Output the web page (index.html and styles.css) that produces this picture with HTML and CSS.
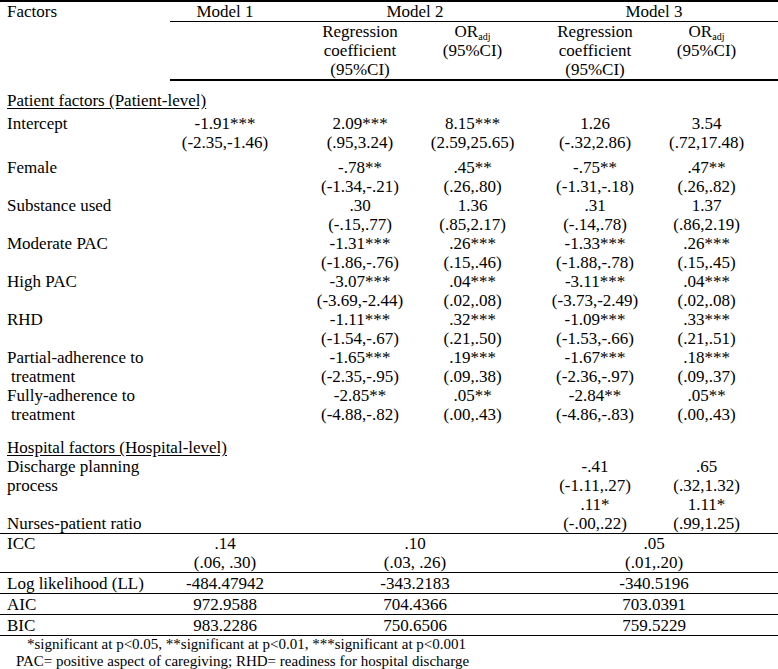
FILE: index.html
```html
<!DOCTYPE html>
<html lang="en">
<head>
<meta charset="utf-8">
<title>Multilevel model table</title>
<link rel="stylesheet" href="styles.css">
</head>
<body>
<table class="tbl">
  <colgroup>
    <col class="w-f"><col class="w-m1"><col class="w-r2"><col class="w-o2"><col class="w-r3"><col class="w-o3">
  </colgroup>
  <thead>
    <tr>
      <th class="lbl" rowspan="2">Factors</th>
      <th class="mh c1">Model 1</th>
      <th class="mh c2h" colspan="2">Model 2</th>
      <th class="mh" colspan="2">Model 3</th>
    </tr>
    <tr class="sub">
      <th></th>
      <th class="c2">Regression<br>coefficient<br>(95%CI)</th>
      <th class="c3">OR<sub>adj</sub><br>(95%CI)</th>
      <th class="c4">Regression<br>coefficient<br>(95%CI)</th>
      <th class="c5">OR<sub>adj</sub><br>(95%CI)</th>
    </tr>
  </thead>
  <tbody>
    <tr class="sect"><td class="lbl" colspan="6"><span class="u">Patient factors (Patient-level)</span></td></tr>
    <tr class="first">
      <td class="lbl">Intercept</td>
      <td class="c1">-1.91***<br>(-2.35,-1.46)</td>
      <td class="c2">2.09***<br>(.95,3.24)</td>
      <td class="c3">8.15***<br>(2.59,25.65)</td>
      <td class="c4">1.26<br>(-.32,2.86)</td>
      <td class="c5">3.54<br>(.72,17.48)</td>
    </tr>
    <tr>
      <td class="lbl">Female</td>
      <td class="c1"></td>
      <td class="c2">-.78**<br>(-1.34,-.21)</td>
      <td class="c3">.45**<br>(.26,.80)</td>
      <td class="c4">-.75**<br>(-1.31,-.18)</td>
      <td class="c5">.47**<br>(.26,.82)</td>
    </tr>
    <tr>
      <td class="lbl">Substance used</td>
      <td class="c1"></td>
      <td class="c2">.30<br>(-.15,.77)</td>
      <td class="c3">1.36<br>(.85,2.17)</td>
      <td class="c4">.31<br>(-.14,.78)</td>
      <td class="c5">1.37<br>(.86,2.19)</td>
    </tr>
    <tr>
      <td class="lbl">Moderate PAC</td>
      <td class="c1"></td>
      <td class="c2">-1.31***<br>(-1.86,-.76)</td>
      <td class="c3">.26***<br>(.15,.46)</td>
      <td class="c4">-1.33***<br>(-1.88,-.78)</td>
      <td class="c5">.26***<br>(.15,.45)</td>
    </tr>
    <tr>
      <td class="lbl">High PAC</td>
      <td class="c1"></td>
      <td class="c2">-3.07***<br>(-3.69,-2.44)</td>
      <td class="c3">.04***<br>(.02,.08)</td>
      <td class="c4">-3.11***<br>(-3.73,-2.49)</td>
      <td class="c5">.04***<br>(.02,.08)</td>
    </tr>
    <tr>
      <td class="lbl">RHD</td>
      <td class="c1"></td>
      <td class="c2">-1.11***<br>(-1.54,-.67)</td>
      <td class="c3">.32***<br>(.21,.50)</td>
      <td class="c4">-1.09***<br>(-1.53,-.66)</td>
      <td class="c5">.33***<br>(.21,.51)</td>
    </tr>
    <tr>
      <td class="lbl">Partial-adherence to<br><span class="ind">treatment</span></td>
      <td class="c1"></td>
      <td class="c2">-1.65***<br>(-2.35,-.95)</td>
      <td class="c3">.19***<br>(.09,.38)</td>
      <td class="c4">-1.67***<br>(-2.36,-.97)</td>
      <td class="c5">.18***<br>(.09,.37)</td>
    </tr>
    <tr>
      <td class="lbl">Fully-adherence to<br><span class="ind">treatment</span></td>
      <td class="c1"></td>
      <td class="c2">-2.85**<br>(-4.88,-.82)</td>
      <td class="c3">.05**<br>(.00,.43)</td>
      <td class="c4">-2.84**<br>(-4.86,-.83)</td>
      <td class="c5">.05**<br>(.00,.43)</td>
    </tr>
    <tr class="sect sect2"><td class="lbl" colspan="6"><span class="u">Hospital factors (Hospital-level)</span></td></tr>
    <tr>
      <td class="lbl">Discharge planning<br>process</td>
      <td class="c1"></td>
      <td class="c2"></td>
      <td class="c3"></td>
      <td class="c4">-.41<br>(-1.11,.27)</td>
      <td class="c5">.65<br>(.32,1.32)</td>
    </tr>
    <tr class="rule">
      <td class="lbl bottom">Nurses-patient ratio</td>
      <td class="c1"></td>
      <td class="c2"></td>
      <td class="c3"></td>
      <td class="c4">.11*<br>(-.00,.22)</td>
      <td class="c5">1.11*<br>(.99,1.25)</td>
    </tr>
    <tr class="rule">
      <td class="lbl">ICC</td>
      <td class="c1">.14<br>(.06, .30)</td>
      <td class="c2h" colspan="2">.10<br>(.03, .26)</td>
      <td colspan="2">.05<br>(.01,.20)</td>
    </tr>
    <tr class="rule one">
      <td class="lbl">Log likelihood (LL)</td>
      <td class="c1">-484.47942</td>
      <td class="c2h" colspan="2">-343.2183</td>
      <td colspan="2">-340.5196</td>
    </tr>
    <tr class="rule one">
      <td class="lbl">AIC</td>
      <td class="c1">972.9588</td>
      <td class="c2h" colspan="2">704.4366</td>
      <td colspan="2">703.0391</td>
    </tr>
    <tr class="rule one">
      <td class="lbl">BIC</td>
      <td class="c1">983.2286</td>
      <td class="c2h" colspan="2">750.6506</td>
      <td colspan="2">759.5229</td>
    </tr>
  </tbody>
</table>
<div class="notes">
  <p class="n1">*significant at p&lt;0.05, **significant at p&lt;0.01, ***significant at p&lt;0.001</p>
  <p class="n2">PAC= positive aspect of caregiving; RHD= readiness for hospital discharge</p>
</div>
</body>
</html>
```
FILE: styles.css
```css
html, body {
  margin: 0;
  padding: 0;
  background: #fff;
}
body {
  color: #000;
  font-family: "Liberation Serif", "Times New Roman", serif;
  font-size: 17px;
}
.tbl {
  width: 778px;
  border-collapse: collapse;
  table-layout: fixed;
  border-top: 2px solid #000;
}
.w-f { width: 170px; }
.w-m1 { width: 120px; }
.w-r2 { width: 125px; }
.w-o2 { width: 115px; }
.w-r3 { width: 125px; }
.w-o3 { width: 123px; }
.tbl th, .tbl td {
  padding: 0;
  line-height: 19px;
  font-weight: normal;
  text-align: center;
  vertical-align: top;
  white-space: nowrap;
}
.tbl .lbl {
  text-align: left;
  padding-left: 7px;
}
.tbl .bottom { vertical-align: bottom; }
.mh { border-bottom: 1px solid #000; }
.sub th { border-bottom: 2px solid #000; }
.c1 { padding-right: 10px !important; }
.c2 { padding-left: 15px !important; }
.c2h { padding-left: 10px !important; }
.c4 { padding-left: 5px !important; }
.c5 { padding-right: 20px !important; }
sub {
  font-size: 10px;
  line-height: 0;
  vertical-align: -3px;
}
.u { text-decoration: underline; text-underline-offset: 2px; }
.sect td { padding-top: 10px; }
.sect2 td { padding-top: 14px; }
.first td { padding-top: 4px; padding-bottom: 6px; }
.ind { padding-left: 4px; }
.rule td { border-bottom: 1px solid #000; }
.one td { padding-top: 1px; }
.notes {
  font-size: 15px;
  line-height: 17px;
}
.notes p { margin: 0; }
.n1 { padding-left: 27px; }
.n2 { padding-left: 16px; }
```
